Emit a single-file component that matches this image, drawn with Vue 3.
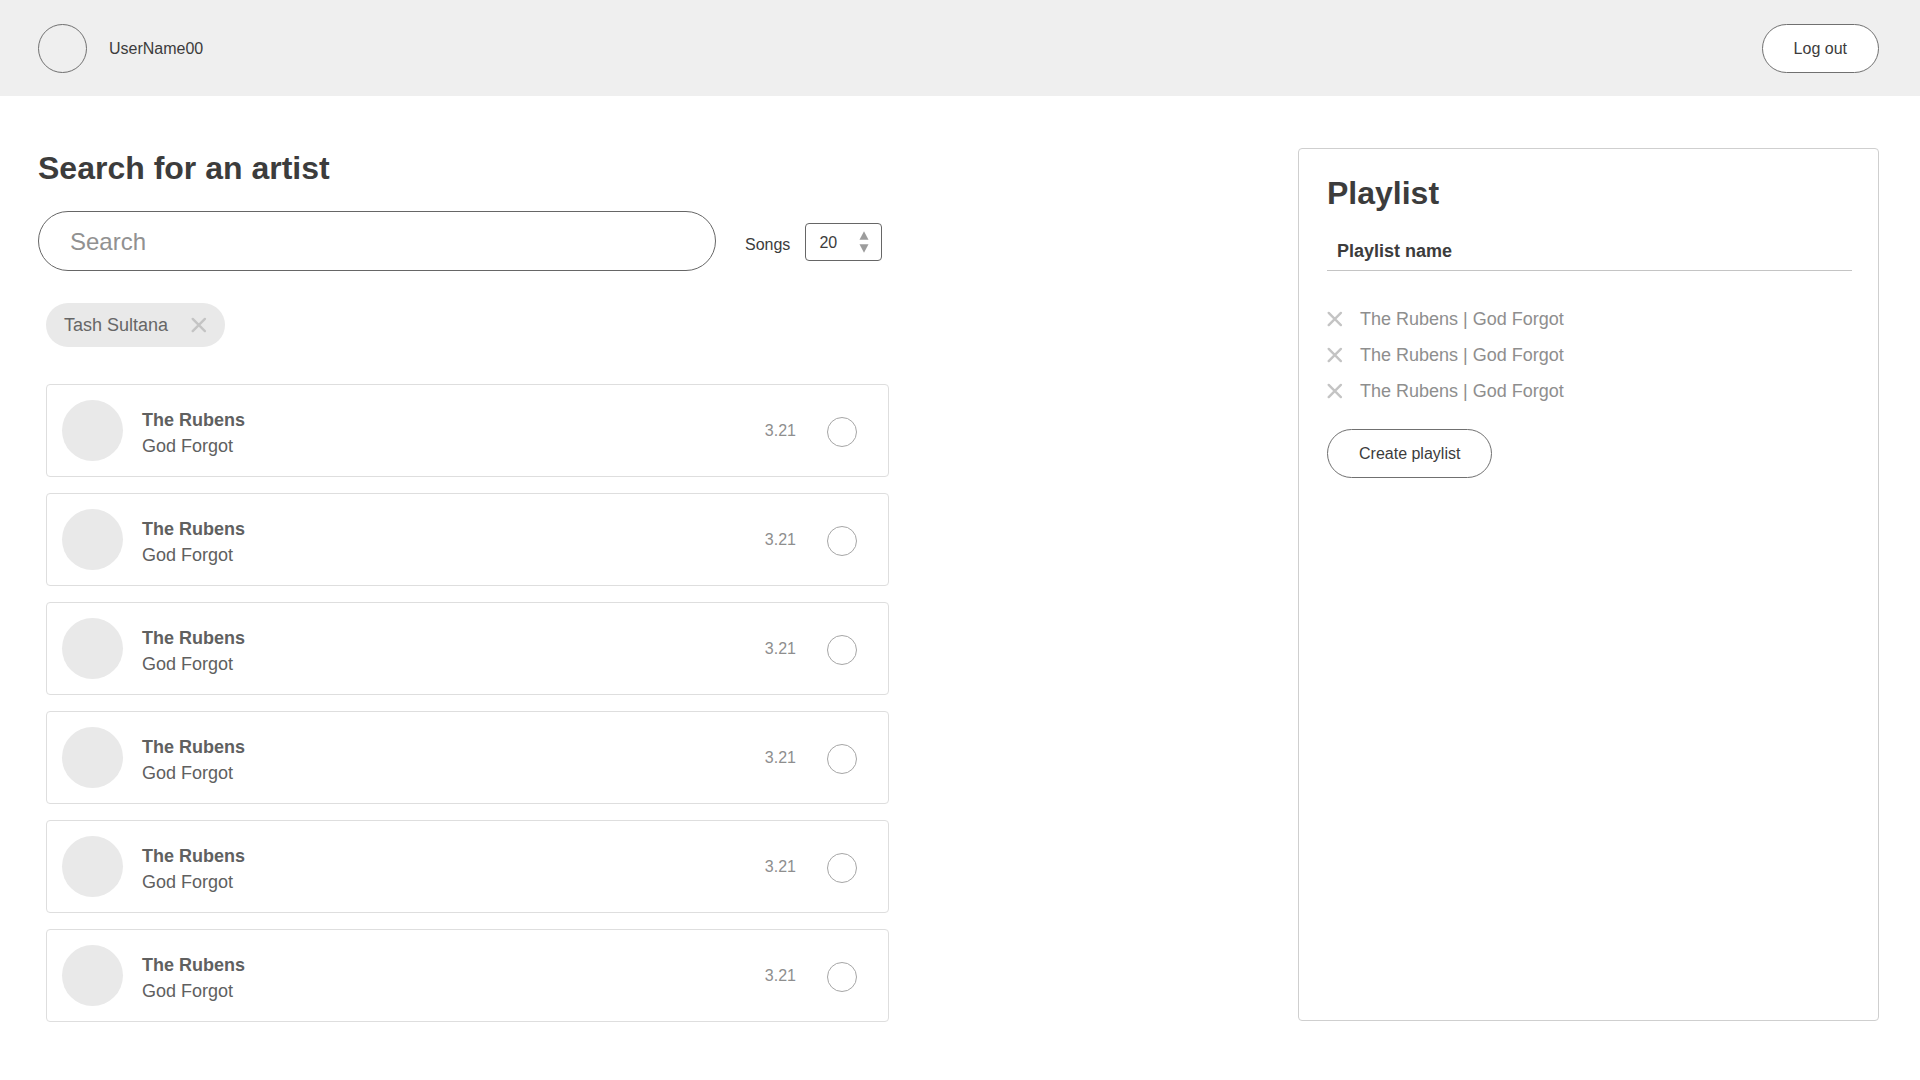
<script setup>
import { ref } from 'vue'

const userName = ref('UserName00')
const query = ref('')
const songCount = ref(20)
const artists = ref(['Tash Sultana'])
const playlistName = ref('Playlist name')

const songs = ref(
  Array.from({ length: 6 }, (_, i) => ({
    id: i + 1,
    artist: 'The Rubens',
    title: 'God Forgot',
    length: '3.21',
    picked: false
  }))
)

const playlist = ref(
  Array.from({ length: 3 }, (_, i) => ({ id: i + 1, artist: 'The Rubens', title: 'God Forgot' }))
)

function removeArtist(index) {
  artists.value.splice(index, 1)
}

function removeTrack(index) {
  playlist.value.splice(index, 1)
}
</script>

<template>
  <div class="page">
    <header class="topbar">
      <div class="user">
        <span class="avatar"></span>
        <span>{{ userName }}</span>
      </div>
      <button type="button" class="pill-button">Log out</button>
    </header>

    <main class="content">
      <section class="finder">
        <h1 class="heading"><label for="artist-search">Search for an artist</label></h1>

        <div class="search-row">
          <input id="artist-search" v-model="query" class="search" type="text" placeholder="Search" />
          <div class="count">
            <label class="count-label" for="song-count">Songs</label>
            <div class="stepper">
              <input id="song-count" v-model.number="songCount" type="number" min="1" />
              <div class="arrows">
                <button type="button" aria-label="More songs" @click="songCount++">
                  <svg width="10" height="9" viewBox="0 0 10 9"><path d="M5 0.300L9.500 8.700H0.500Z" /></svg>
                </button>
                <button type="button" aria-label="Fewer songs" @click="songCount--">
                  <svg width="10" height="9" viewBox="0 0 10 9"><path d="M5 8.700L9.500 0.300H0.500Z" /></svg>
                </button>
              </div>
            </div>
          </div>
        </div>

        <div class="tags">
          <span v-for="(name, i) in artists" :key="name" class="tag">
            {{ name }}
            <button type="button" class="remove" :aria-label="`Remove ${name}`" @click="removeArtist(i)">
              <svg width="16" height="16" viewBox="0 0 16 16"><path d="M1.700 1.900L13.900 14.100M13.900 1.900L1.700 14.100" /></svg>
            </button>
          </span>
        </div>

        <ul class="songs">
          <li v-for="song in songs" :key="song.id" class="song">
            <span class="cover"></span>
            <label class="song-text" :for="`song-${song.id}`">
              <strong>{{ song.artist }}</strong>
              <span>{{ song.title }}</span>
            </label>
            <span class="length">{{ song.length }}</span>
            <input :id="`song-${song.id}`" v-model="song.picked" class="pick" type="checkbox" />
          </li>
        </ul>
      </section>

      <aside class="panel">
        <h2 class="heading">Playlist</h2>
        <input v-model="playlistName" class="playlist-name" type="text" aria-label="Playlist name" />
        <ul class="tracks">
          <li v-for="(track, i) in playlist" :key="track.id" class="track">
            <button type="button" class="remove" aria-label="Remove track" @click="removeTrack(i)">
              <svg width="16" height="16" viewBox="0 0 16 16"><path d="M1.700 1.900L13.900 14.100M13.900 1.900L1.700 14.100" /></svg>
            </button>
            <span>{{ track.artist }} | {{ track.title }}</span>
          </li>
        </ul>
        <button type="button" class="pill-button">Create playlist</button>
      </aside>
    </main>
  </div>
</template>

<style>
body {
  margin: 0;
  background: #fff;
}
</style>

<style scoped>
.page,
.page * {
  box-sizing: border-box;
}

.page {
  font-family: "Liberation Sans", Arial, sans-serif;
  font-size: 16px;
  color: #3c3c3c;
}

button,
input {
  margin: 0;
  padding: 0;
  border: 0;
  background: none;
  font: inherit;
  color: inherit;
}

button {
  cursor: pointer;
}

ul {
  margin: 0;
  padding: 0;
  list-style: none;
}

svg {
  display: block;
}

.topbar {
  display: flex;
  align-items: center;
  justify-content: space-between;
  height: 96px;
  padding: 1px 41px 0 38px;
  background: #efefef;
}

.user {
  display: flex;
  align-items: center;
  gap: 22px;
}

.avatar {
  width: 49px;
  height: 49px;
  border: 1px solid #707070;
  border-radius: 50%;
}

.pill-button {
  height: 49px;
  padding: 0 31px;
  border: 1px solid #707070;
  border-radius: 25px;
  background: #fff;
}

.content {
  display: flex;
  justify-content: space-between;
  gap: 40px;
  padding: 52px 41px 58px 38px;
}

.finder {
  flex: 0 1 851px;
}

.heading {
  margin: 0;
  font-size: 32px;
  line-height: 40px;
  font-weight: bold;
}

.search-row {
  display: flex;
  align-items: center;
  gap: 29px;
  margin-top: 23px;
}

.search {
  flex: 0 1 678px;
  min-width: 0;
  height: 60px;
  padding: 2px 31px 0;
  border: 1px solid #666;
  border-radius: 30px;
  font-size: 24px;
}

.search::placeholder {
  color: #919191;
  opacity: 1;
}

.count {
  display: flex;
  align-items: center;
  gap: 15px;
  margin-top: 2px;
}

.count-label {
  padding-top: 6px;
}

.stepper {
  display: flex;
  align-items: center;
  justify-content: space-between;
  width: 77px;
  height: 38px;
  padding: 0 12px 0 13px;
  border: 1px solid #666;
  border-radius: 4px;
}

.stepper input {
  width: 36px;
  padding-top: 2px;
  appearance: textfield;
}

.stepper input::-webkit-inner-spin-button,
.stepper input::-webkit-outer-spin-button {
  appearance: none;
  margin: 0;
}

.arrows {
  display: flex;
  flex-direction: column;
  gap: 4px;
}

.arrows path {
  fill: #9c9c9c;
}

.tags {
  display: flex;
  gap: 8px;
  margin: 32px 0 0 8px;
}

.tag {
  display: flex;
  align-items: center;
  gap: 23px;
  height: 44px;
  padding: 0 18px;
  border-radius: 22px;
  background: #e9e9e9;
  font-size: 18px;
  color: #666;
}

.remove path {
  fill: none;
  stroke: #c4c4c4;
  stroke-width: 2.4;
  stroke-linecap: round;
}

.songs {
  display: flex;
  flex-direction: column;
  gap: 16px;
  margin: 37px 0 0 8px;
}

.song {
  display: flex;
  align-items: center;
  height: 93px;
  padding: 0 31px 0 15px;
  border: 1px solid #dedede;
  border-radius: 4px;
}

.cover {
  flex: none;
  width: 61px;
  height: 61px;
  border-radius: 50%;
  background: #e9e9e9;
}

.song-text {
  display: flex;
  flex: 1;
  flex-direction: column;
  padding: 5px 0 0 19px;
  font-size: 18px;
  line-height: 26px;
  color: #606060;
}

.length {
  color: #8e8e8e;
}

.pick {
  appearance: none;
  width: 30px;
  height: 30px;
  margin: 3px 0 0 31px;
  border: 1px solid #a6a6a6;
  border-radius: 50%;
}

.pick:checked {
  background: #a6a6a6;
}

.panel {
  flex: 0 1 581px;
  margin-bottom: 1px;
  padding: 24px 26px 24px 28px;
  border: 1px solid #cfcfcf;
  border-radius: 4px;
}

.playlist-name {
  display: block;
  width: 100%;
  height: 38px;
  margin-top: 20px;
  padding: 0 10px;
  border-bottom: 1px solid #c4c4c4;
  font-size: 18px;
  font-weight: bold;
}

.tracks {
  margin: 30px 0 20px;
}

.track {
  display: flex;
  align-items: center;
  gap: 17px;
  height: 36px;
  font-size: 18px;
  color: #8e8e8e;
}
</style>
